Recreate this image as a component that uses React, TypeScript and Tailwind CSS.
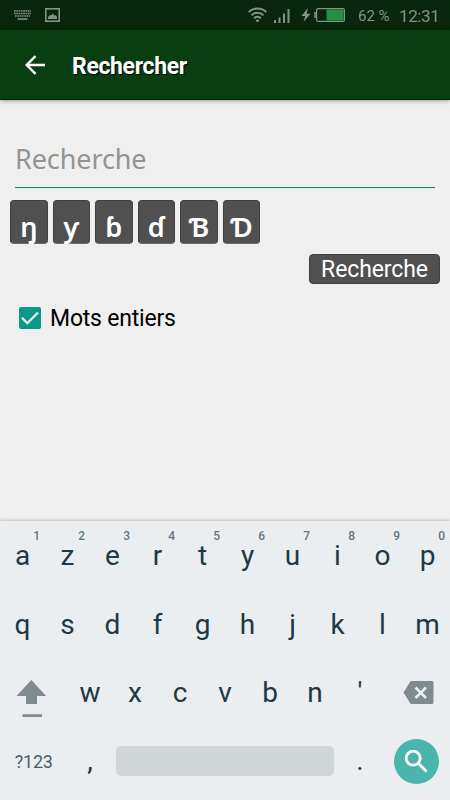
import React, { useState } from "react";

interface LetterKeyProps {
  label: string;
  hint?: string;
}

const TOP_ROW = ["a", "z", "e", "r", "t", "y", "u", "i", "o", "p"];
const HINTS = ["1", "2", "3", "4", "5", "6", "7", "8", "9", "0"];
const HOME_ROW = ["q", "s", "d", "f", "g", "h", "j", "k", "l", "m"];
const BOTTOM_ROW = ["w", "x", "c", "v", "b", "n", "'"];
const SPECIAL_LETTERS = ["ŋ", "ƴ", "ɓ", "ɗ", "Ɓ", "Ɗ"];

const StatusBar = () => (
  <div className="flex h-[30px] items-center bg-[#07260b] text-[#839385]">
    <svg className="ml-[14px] h-[10px] w-[17px]" viewBox="0 0 17 10" fill="none" stroke="currentColor">
      <path d="M0 1h17M0 3.5h17M1 6h15" strokeWidth="1.6" strokeDasharray="1.7 .6" />
      <path d="M3.5 9h10" strokeWidth="1.6" />
    </svg>
    <svg className="ml-[14px] h-[14px] w-[15px]" viewBox="0 0 15 14">
      <rect x=".8" y=".8" width="13.4" height="12.4" fill="none" stroke="currentColor" strokeWidth="1.6" />
      <path d="M3 11V9l2-2 1 .5L7.5 5.5l2 2 1-.5L12 9v2z" fill="currentColor" />
    </svg>
    <svg className="ml-[188px] h-[16px] w-[19px]" viewBox="0 0 19 16" fill="none" stroke="currentColor" strokeWidth="2">
      <path d="M.7 5a12.5 12.5 0 0 1 17.6 0M3.5 8.2a8.5 8.5 0 0 1 12 0M6.2 11.2a4.7 4.7 0 0 1 6.600 0" />
      <path d="M7.5 13.5a2.5 2.5 0 0 1 4 0l-2 2z" fill="currentColor" stroke="none" />
    </svg>
    <svg className="ml-[7px] mt-[2px] h-[14px] w-[16px]" viewBox="0 0 16 14" fill="currentColor">
      <path d="M0 11h2v3H0zM4.5 8.5h2V14h-2zM9 4.5h2V14H9zM13.5 0h2v14h-2z" />
    </svg>
    <svg className="ml-[11px] h-[14px] w-[10px]" viewBox="0 0 10 14" fill="currentColor">
      <path d="M7 0 .5 8h3.700L2.500 14 9.500 5.700H5.700z" />
    </svg>
    <svg className="ml-[3px] h-[14px] w-[31px]" viewBox="0 0 31 14">
      <rect x="2.6" y=".6" width="27.8" height="12.8" rx="1.5" fill="none" stroke="currentColor" strokeWidth="1.2" />
      <path d="M1 4v6" stroke="currentColor" strokeWidth="1.6" />
      <path d="M12.5 1.5h17v11h-17z" fill="#229145" />
    </svg>
    <span className="ml-[13px] w-[41px] whitespace-nowrap pt-[1px] text-[15px] leading-[30px]">62 %</span>
    <span className="whitespace-nowrap pt-[2px] text-[17px] leading-[28px] tracking-[-0.4px]">12:31</span>
  </div>
);

const AppBar = () => (
  <header className="relative flex h-[70px] items-center border-b border-[#03240a] bg-[#083e10] text-white shadow-[0_1px_4px_rgba(0,0,0,0.35)]">
    <button className="ml-[25px]" aria-label="Retour">
      <svg className="h-[20px] w-[20px]" viewBox="0 0 20 20" fill="none" stroke="currentColor" strokeWidth="2.4">
        <path d="M20 10H2M10.5 1.2 1.7 10l8.8 8.8" />
      </svg>
    </button>
    <h1 className="ml-[27px] pt-[5px] text-[23px] font-bold leading-[30px] tracking-[-0.35px] [text-shadow:1px_1px_1px_#000]">
      Rechercher
    </h1>
  </header>
);

const LetterKey = ({ label, hint }: LetterKeyProps) => (
  <button className="relative w-[45px] text-center text-[28px] leading-[70px] text-[#1f3843]">
    {label}
    {hint && (
      <span className="absolute right-[5px] top-[7px] text-[12px] font-medium leading-[16px] text-[#66757b]">
        {hint}
      </span>
    )}
  </button>
);

const Keyboard = () => (
  <div className="relative h-[279px] bg-[#ebeef1] shadow-[0_-1px_3px_rgba(0,0,0,0.2)]">
    <div className="flex h-[68.5px]">
      {TOP_ROW.map((letter, index) => (
        <LetterKey key={letter} label={letter} hint={HINTS[index]} />
      ))}
    </div>
    <div className="flex h-[68.5px]">
      {HOME_ROW.map((letter) => (
        <LetterKey key={letter} label={letter} />
      ))}
    </div>
    <div className="flex h-[68.5px]">
      <button className="flex w-[67.5px] items-start pl-[16px] pt-[22px]" aria-label="Majuscule">
        <svg className="h-[38px] w-[31px]" viewBox="0 0 31 38" fill="#7f8b8f">
          <path d="M15.3 0 30.2 16H21v8H10v-8H.5zM6.5 34.2H26V37H6.5z" />
        </svg>
      </button>
      {BOTTOM_ROW.map((letter) => (
        <LetterKey key={letter} label={letter} />
      ))}
      <button className="flex w-[67.5px] items-center pl-[20px]" aria-label="Effacer">
        <svg className="h-[23px] w-[31px]" viewBox="0 0 31 23">
          <path d="M8.5 0H29q1.500 0 1.500 1.500v20Q30.500 23 29 23H8.500Q7.500 23 7 22L.5 11.500 7 1Q7.500 0 8.500 0z" fill="#7f8b8f" />
          <path d="m12.500 6.500 10.500 10.500M23 6.500 12.500 17" stroke="#ebeef1" strokeWidth="2.5" />
        </svg>
      </button>
    </div>
    <div className="flex h-[68.5px] items-center">
      <button className="w-[67.5px] pt-[1px] text-center text-[18px] tracking-[-0.2px] text-[#4c5e66]">?123</button>
      <LetterKey label="," />
      <button className="ml-[3.5px] h-[30px] w-[218px] rounded-[5px] bg-[#d0d5d8]" aria-label="Espace" />
      <div className="ml-[3.5px]">
        <LetterKey label="." />
      </div>
      <button
        className="ml-[11px] mt-px flex h-[45px] w-[45px] items-center justify-center rounded-full bg-[#4ab5aa]"
        aria-label="Lancer la recherche"
      >
        <svg className="h-[24px] w-[24px]" viewBox="0 0 24 24" fill="none" stroke="#fff" strokeWidth="2.8">
          <circle cx="9.2" cy="9.2" r="7" />
          <path d="m14 14 8.5 8.5" />
        </svg>
      </button>
    </div>
  </div>
);

const App = () => {
  const [query, setQuery] = useState("");
  const [wholeWords, setWholeWords] = useState(true);

  return (
    <div className="flex h-[800px] w-[450px] flex-col overflow-hidden bg-[#efefef] font-[Roboto,sans-serif]">
      <StatusBar />
      <AppBar />

      <main className="flex-1 px-[10px] pt-[39px]">
        <input
          className="mx-[5px] block h-[49px] w-[420px] border-b border-[#0b8573] bg-transparent pb-[10px] font-['Noto_Sans',sans-serif] text-[27px] tracking-[-0.1px] text-black outline-none placeholder:text-[#949494]"
          placeholder="Recherche"
          value={query}
          onChange={(e) => setQuery(e.target.value)}
        />

        {/* Letters missing from the keyboard */}
        <div className="mt-[12px] flex gap-[5px]">
          {SPECIAL_LETTERS.map((letter) => (
            <button
              key={letter}
              onClick={() => setQuery(query + letter)}
              className="h-[44px] w-[37.5px] rounded-[4px] border border-[#404040] border-b-[#6c6c6c] bg-[#505050] pt-[9px] font-['Noto_Sans',sans-serif] text-[27px] font-semibold leading-[33px] text-white"
            >
              {letter}
            </button>
          ))}
        </div>

        <div className="mt-[10px] flex justify-end">
          <button className="h-[30px] w-[131px] rounded-[4px] border border-[#404040] bg-[#505050] pt-[2px] text-[23px] leading-[26px] tracking-[-0.1px] text-white">
            Recherche
          </button>
        </div>

        <button className="ml-[9px] mt-[16px] flex items-center" onClick={() => setWholeWords(!wholeWords)}>
          <span className="mt-px flex h-[22px] w-[22px] items-center justify-center rounded-[2px] bg-[#0b9888]">
            {wholeWords && (
              <svg className="h-[14px] w-[18px]" viewBox="0 0 18 14" fill="none" stroke="#efefef" strokeWidth="2.3">
                <path d="m1 6.8 5.3 5.4L17 1.5" />
              </svg>
            )}
          </span>
          <span className="ml-[9px] pt-[4px] text-[23px] leading-[30px] tracking-[-0.2px] text-black">Mots entiers</span>
        </button>
      </main>

      <Keyboard />
    </div>
  );
};

export default App;
